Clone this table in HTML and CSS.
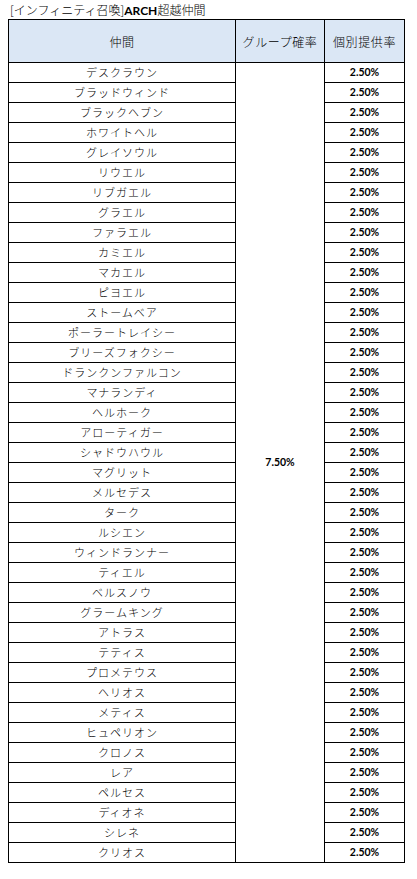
FILE: index.html
```html
<!DOCTYPE html>
<html lang="ja">
<head>
<meta charset="utf-8">
<link rel="stylesheet" href="styles.css">
</head>
<body>
<div class="page">
  <div class="title">[インフィニティ召喚]<b class="latin">ARCH</b>超越仲間</div>
  <table class="rates">
    <colgroup>
      <col class="c-name"><col class="c-group"><col class="c-each">
    </colgroup>
    <thead>
      <tr><th>仲間</th><th>グループ確率</th><th>個別提供率</th></tr>
    </thead>
    <tbody>
      <tr><td class="name">デスクラウン</td><td class="group" rowspan="40">7.50%</td><td class="pct">2.50%</td></tr>
      <tr><td class="name">ブラッドウィンド</td><td class="pct">2.50%</td></tr>
      <tr><td class="name">ブラックヘブン</td><td class="pct">2.50%</td></tr>
      <tr><td class="name">ホワイトヘル</td><td class="pct">2.50%</td></tr>
      <tr><td class="name">グレイソウル</td><td class="pct">2.50%</td></tr>
      <tr><td class="name">リウエル</td><td class="pct">2.50%</td></tr>
      <tr><td class="name">リブガエル</td><td class="pct">2.50%</td></tr>
      <tr><td class="name">グラエル</td><td class="pct">2.50%</td></tr>
      <tr><td class="name">ファラエル</td><td class="pct">2.50%</td></tr>
      <tr><td class="name">カミエル</td><td class="pct">2.50%</td></tr>
      <tr><td class="name">マカエル</td><td class="pct">2.50%</td></tr>
      <tr><td class="name">ピヨエル</td><td class="pct">2.50%</td></tr>
      <tr><td class="name">ストームベア</td><td class="pct">2.50%</td></tr>
      <tr><td class="name">ポーラートレイシー</td><td class="pct">2.50%</td></tr>
      <tr><td class="name">ブリーズフォクシー</td><td class="pct">2.50%</td></tr>
      <tr><td class="name">ドランクンファルコン</td><td class="pct">2.50%</td></tr>
      <tr><td class="name">マナランディ</td><td class="pct">2.50%</td></tr>
      <tr><td class="name">ヘルホーク</td><td class="pct">2.50%</td></tr>
      <tr><td class="name">アローティガー</td><td class="pct">2.50%</td></tr>
      <tr><td class="name">シャドウハウル</td><td class="pct">2.50%</td></tr>
      <tr><td class="name">マグリット</td><td class="pct">2.50%</td></tr>
      <tr><td class="name">メルセデス</td><td class="pct">2.50%</td></tr>
      <tr><td class="name">ターク</td><td class="pct">2.50%</td></tr>
      <tr><td class="name">ルシエン</td><td class="pct">2.50%</td></tr>
      <tr><td class="name">ウィンドランナー</td><td class="pct">2.50%</td></tr>
      <tr><td class="name">ティエル</td><td class="pct">2.50%</td></tr>
      <tr><td class="name">ベルスノウ</td><td class="pct">2.50%</td></tr>
      <tr><td class="name">グラームキング</td><td class="pct">2.50%</td></tr>
      <tr><td class="name">アトラス</td><td class="pct">2.50%</td></tr>
      <tr><td class="name">テティス</td><td class="pct">2.50%</td></tr>
      <tr><td class="name">プロメテウス</td><td class="pct">2.50%</td></tr>
      <tr><td class="name">ヘリオス</td><td class="pct">2.50%</td></tr>
      <tr><td class="name">メティス</td><td class="pct">2.50%</td></tr>
      <tr><td class="name">ヒュペリオン</td><td class="pct">2.50%</td></tr>
      <tr><td class="name">クロノス</td><td class="pct">2.50%</td></tr>
      <tr><td class="name">レア</td><td class="pct">2.50%</td></tr>
      <tr><td class="name">ペルセス</td><td class="pct">2.50%</td></tr>
      <tr><td class="name">ディオネ</td><td class="pct">2.50%</td></tr>
      <tr><td class="name">シレネ</td><td class="pct">2.50%</td></tr>
      <tr><td class="name">クリオス</td><td class="pct">2.50%</td></tr>
    </tbody>
  </table>
</div>
</body>
</html>
```
FILE: styles.css
```css
html, body {
  margin: 0;
  padding: 0;
  background: #ffffff;
}
.page {
  padding: 2px 0 0 8px;
  font-family: "Noto Sans CJK JP", sans-serif;
  color: #000;
}
.title {
  font-size: 12px;
  line-height: 16px;
  height: 17px;
  padding-left: 2px;
  font-weight: 300;
}
.title .latin {
  font-family: Lato, "Liberation Sans", sans-serif;
  font-weight: 700;
  font-size: 12px;
}
.rates {
  border-collapse: collapse;
  table-layout: fixed;
  width: 396px;
}
.c-name { width: 227px; }
.c-group { width: 89px; }
.c-each { width: 80px; }
.rates th, .rates td {
  border: 1px solid #000;
  padding: 0;
  text-align: center;
}
.rates th {
  background: #dbe7f5;
  height: 42px;
  font-size: 12px;
  font-weight: 300;
  letter-spacing: 0.6px;
}
.rates td {
  height: 19px;
  line-height: 19px;
}
.rates td.name {
  font-size: 11px;
  font-weight: 300;
  letter-spacing: 1px;
}
.rates td.pct, .rates td.group {
  font-family: Lato, "Liberation Sans", sans-serif;
  font-weight: 700;
  font-size: 10.5px;
}
.rates td.group {
  vertical-align: middle;
}
```
